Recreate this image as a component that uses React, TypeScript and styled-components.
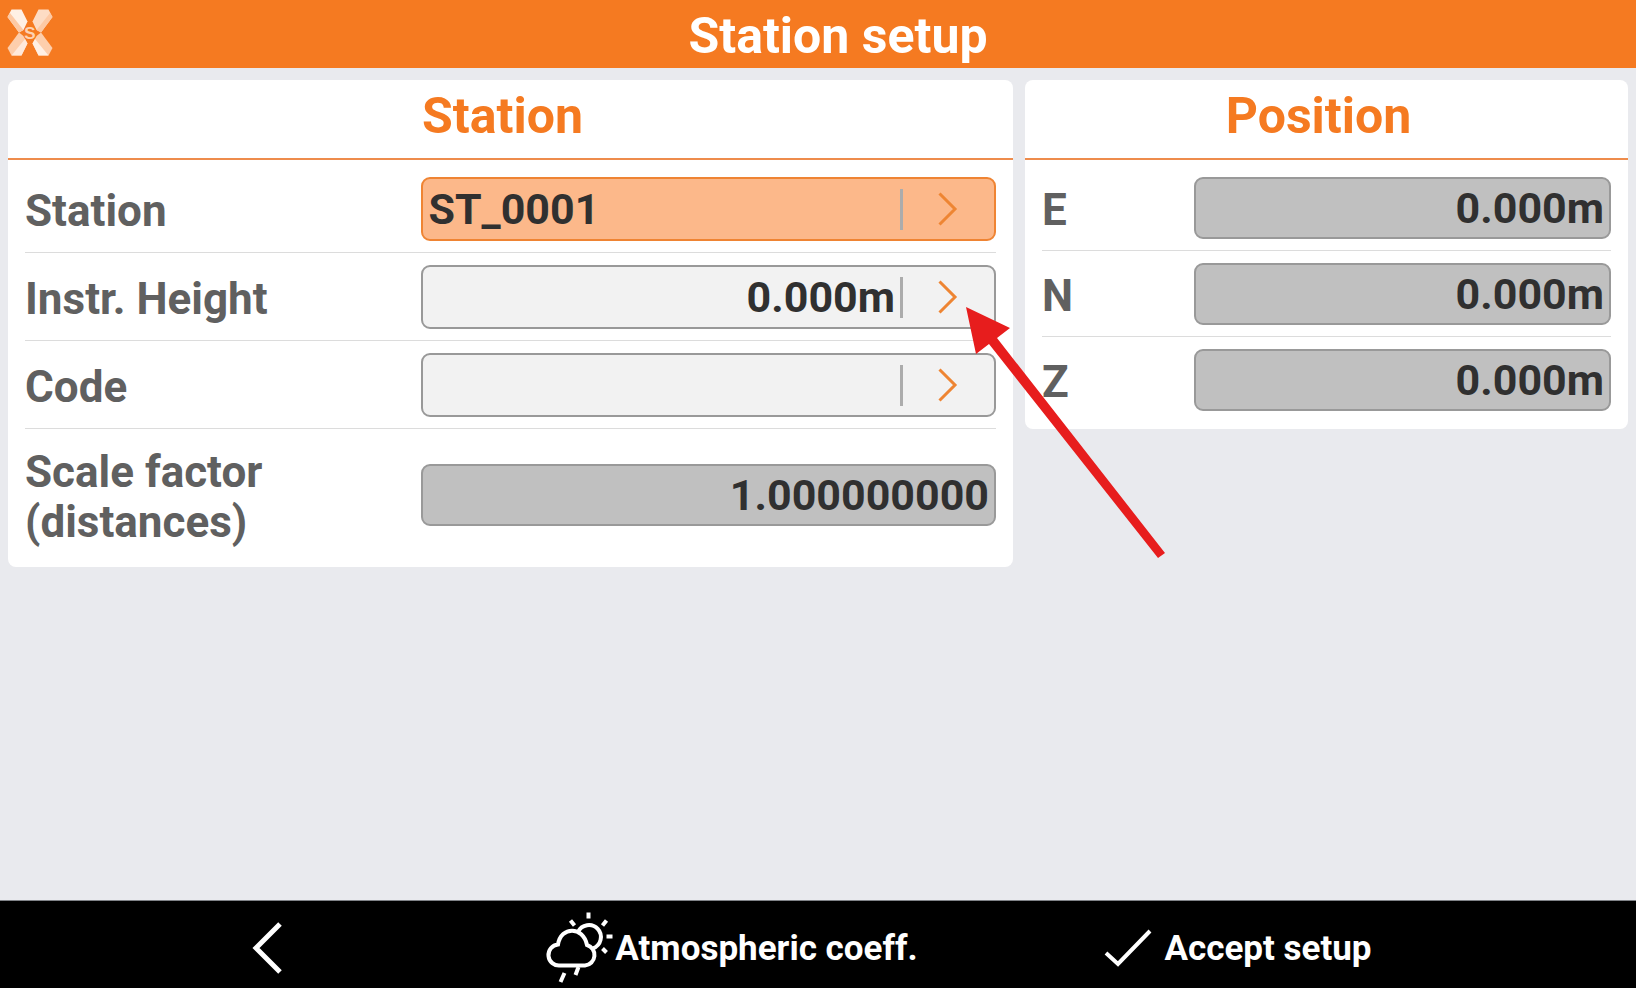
import React from "react";
import styled, { createGlobalStyle } from "styled-components";

const GlobalStyle = createGlobalStyle`
  *, *::before, *::after { box-sizing: border-box; }
  body {
    margin: 0;
    background: #e9eaee;
    font-family: Roboto, "Liberation Sans", sans-serif;
    font-weight: 700;
  }
`;

const Screen = styled.div`
  min-height: 100vh;
  display: flex;
  flex-direction: column;
`;

const TopBar = styled.header`
  height: 68px;
  display: grid;
  grid-template-columns: 60px 1fr 20px;
  align-items: center;
  background: #f57a21;
  color: #fff;
`;

const HomeButton = styled.button`
  padding: 0 0 4px 6px;
  border: 0;
  background: none;
  display: flex;
`;

const Title = styled.h1`
  margin: 0;
  padding-top: 4px;
  font-size: 50px;
  line-height: 64px;
  text-align: center;
`;

const Content = styled.main`
  flex: 1;
  display: grid;
  grid-template-columns: minmax(0, 5fr) minmax(0, 3fr);
  align-items: start;
  gap: 12px;
  padding: 12px 8px;
`;

const Panel = styled.section`
  background: #fff;
  border-radius: 8px;
`;

const PanelTitle = styled.h2`
  margin: 0;
  height: 80px;
  padding: 4px 16px 0 0;
  border-bottom: 2px solid #ee8c4c;
  color: #f57a21;
  font-size: 50px;
  line-height: 64px;
  text-align: center;
`;

const Rows = styled.div`
  padding: 5px 17px 7px;
`;

const Row = styled.div<{ $columns: string }>`
  display: grid;
  grid-template-columns: ${(p) => p.$columns};
  align-items: center;
  padding: 12px 0 11px;
  border-bottom: 1px solid #dcdcdc;
  &:last-child { border-bottom: 0; }
`;

const Label = styled.label`
  padding: 6px 0 2px;
  color: #606060;
  font-size: 44px;
  line-height: 50px;
`;

type Tone = "active" | "editable" | "readonly";
const tones: Record<Tone, { fill: string; edge: string; height: number }> = {
  active: { fill: "#fcb88a", edge: "#ef8433", height: 64 },
  editable: { fill: "#f2f2f2", edge: "#999999", height: 64 },
  readonly: { fill: "#c0c0c0", edge: "#999999", height: 62 },
};

const Field = styled.div<{ $tone: Tone }>`
  position: relative;
  min-width: 0;
  display: flex;
  align-items: center;
  height: ${(p) => tones[p.$tone].height}px;
  border: 2px solid ${(p) => tones[p.$tone].edge};
  border-radius: 9px;
  background: ${(p) => tones[p.$tone].fill};
`;

const Value = styled.input<{ $align: "left" | "right" }>`
  flex: 1;
  min-width: 0;
  height: 100%;
  padding: 0 5px;
  border: 0;
  outline: 0;
  background: none;
  color: #303030;
  font: inherit;
  font-size: 43px;
  text-align: ${(p) => p.$align};
`;

const OpenButton = styled.button`
  flex: none;
  width: 94px;
  height: 41px;
  padding: 0 0 0 35px;
  border: 0;
  border-left: 3px solid #acacac;
  background: none;
  display: flex;
  align-items: center;
`;

const Pointer = styled.svg`
  position: absolute;
  left: calc(100% - 28px);
  top: 40px;
  z-index: 1;
  pointer-events: none;
`;

const BottomBar = styled.footer`
  height: 88px;
  padding-top: 6px;
  display: grid;
  grid-template-columns: 534fr 396fr 616fr 90fr;
  align-items: center;
  border-top: 1px solid #808388;
  background: #000;
`;

const Action = styled.button<{ $gap?: number }>`
  display: flex;
  align-items: center;
  justify-content: center;
  gap: ${(p) => p.$gap ?? 0}px;
  padding: 0;
  border: 0;
  background: none;
  color: #fff;
  font: inherit;
  font-size: 35px;
  line-height: 42px;
  white-space: nowrap;
`;

const ActionText = styled.span`
  padding-top: 2px;
`;

const Logo = () => (
  <svg width="48" height="49" viewBox="0 0 48 49" aria-hidden="true">
    <polygon points="1.5,9 5.5,1.5 15.5,1.5 21.5,13.5 17.5,22 13,24.5" fill="#fff0e4" />
    <polygon points="1.5,9 4,5 17.5,22 13,24.5" fill="#fdc9a4" />
    <polygon points="46.5,9 42.5,1.5 32.5,1.5 26.5,13.5 30.5,22 35,24.5" fill="#fddcc4" />
    <polygon points="46.5,9 44,5 30.5,22 35,24.5" fill="#fdc9a4" />
    <polygon points="1.5,40 5.5,47.5 15.5,47.5 21.5,35.5 17.5,28 13,24.5" fill="#fdceac" />
    <polygon points="5.5,47.5 15.5,47.5 21.5,35.5 19,31" fill="#ffe9da" />
    <polygon points="46.5,40 42.5,47.5 32.5,47.5 26.5,35.5 30.5,28 35,24.5" fill="#fdceac" />
    <polygon points="42.5,47.5 32.5,47.5 26.5,35.5 29,31" fill="#fff0e4" />
    <circle cx="24" cy="25" r="7" fill="#f57a21" />
    <text x="24" y="31" fontSize="17" fontWeight="700" fill="#fdd3b4" textAnchor="middle">S</text>
  </svg>
);

const Chevron = () => (
  <svg width="20" height="34" viewBox="0 0 20 34" fill="none" stroke="#ee8533" strokeWidth="3" aria-hidden="true">
    <path d="M1.5 1.5 17 17 1.5 32.5" />
  </svg>
);

const BackIcon = () => (
  <svg width="32" height="54" viewBox="0 0 32 54" fill="none" stroke="#fff" strokeWidth="5" aria-hidden="true">
    <path d="M29 3 5 27 29 51" />
  </svg>
);

const WeatherIcon = () => (
  <svg width="69" height="74" viewBox="0 0 69 74" fill="none" stroke="#fff" strokeWidth="4" aria-hidden="true">
    <path d="M14 54.5H39a10.5 10.5 0 0 0 2-20.5C37 15 15 15 12 33.5A10.5 10.5 0 0 0 14 54.5Z" />
    <path d="M32 21A12 12 0 1 1 47 37.3" />
    <path d="M42.5 1.5v6M24.5 9.5l4 5M60.500 9.5l-4 5M60.5 25.5h6M56.5 37.5l4 4M18.5 62l-4 9M32.5 56l-3 8" />
  </svg>
);

const CheckIcon = () => (
  <svg width="48" height="38" viewBox="0 0 48 38" fill="none" stroke="#fff" strokeWidth="4" aria-hidden="true">
    <path d="M2 24 14 35 46 2" />
  </svg>
);

interface Entry {
  id: string;
  label: string;
  value: string;
  tone: Tone;
  align?: "left" | "right";
  pointed?: boolean;
}

const station: Entry[] = [
  { id: "station", label: "Station", value: "ST_0001", tone: "active", align: "left" },
  { id: "height", label: "Instr. Height", value: "0.000m", tone: "editable", pointed: true },
  { id: "code", label: "Code", value: "", tone: "editable" },
  { id: "scale", label: "Scale factor (distances)", value: "1.000000000", tone: "readonly" },
];

const position: Entry[] = ["E", "N", "Z"].map((axis) => ({
  id: "axis" + axis,
  label: axis,
  value: "0.000m",
  tone: "readonly",
}));

const Form = ({ title, entries, columns }: { title: string; entries: Entry[]; columns: string }) => (
  <Panel>
    <PanelTitle>{title}</PanelTitle>
    <Rows>
      {entries.map((e) => (
        <Row key={e.id} $columns={columns}>
          <Label htmlFor={e.id}>{e.label}</Label>
          <Field $tone={e.tone}>
            <Value id={e.id} defaultValue={e.value} readOnly={e.tone === "readonly"} $align={e.align ?? "right"} />
            {e.tone !== "readonly" && (
              <OpenButton type="button" aria-label={"Open " + e.label}>
                <Chevron />
              </OpenButton>
            )}
            {e.pointed && (
              <Pointer width="200" height="252" viewBox="0 0 200 252" aria-hidden="true">
                <polygon points="0,0 44,21 31,31 199,246 192,251 23,37 10,47" fill="#e71d1d" />
              </Pointer>
            )}
          </Field>
        </Row>
      ))}
    </Rows>
  </Panel>
);

export default function App() {
  return (
    <Screen>
      <GlobalStyle />
      <TopBar>
        <HomeButton type="button" aria-label="Main menu">
          <Logo />
        </HomeButton>
        <Title>Station setup</Title>
      </TopBar>
      <Content>
        <Form title="Station" entries={station} columns="396fr 574fr" />
        <Form title="Position" entries={position} columns="152fr 416fr" />
      </Content>
      <BottomBar>
        <Action type="button" aria-label="Back">
          <BackIcon />
        </Action>
        <Action type="button">
          <WeatherIcon />
          <ActionText>Atmospheric coeff.</ActionText>
        </Action>
        <Action type="button" $gap={12}>
          <CheckIcon />
          <ActionText>Accept setup</ActionText>
        </Action>
      </BottomBar>
    </Screen>
  );
}
